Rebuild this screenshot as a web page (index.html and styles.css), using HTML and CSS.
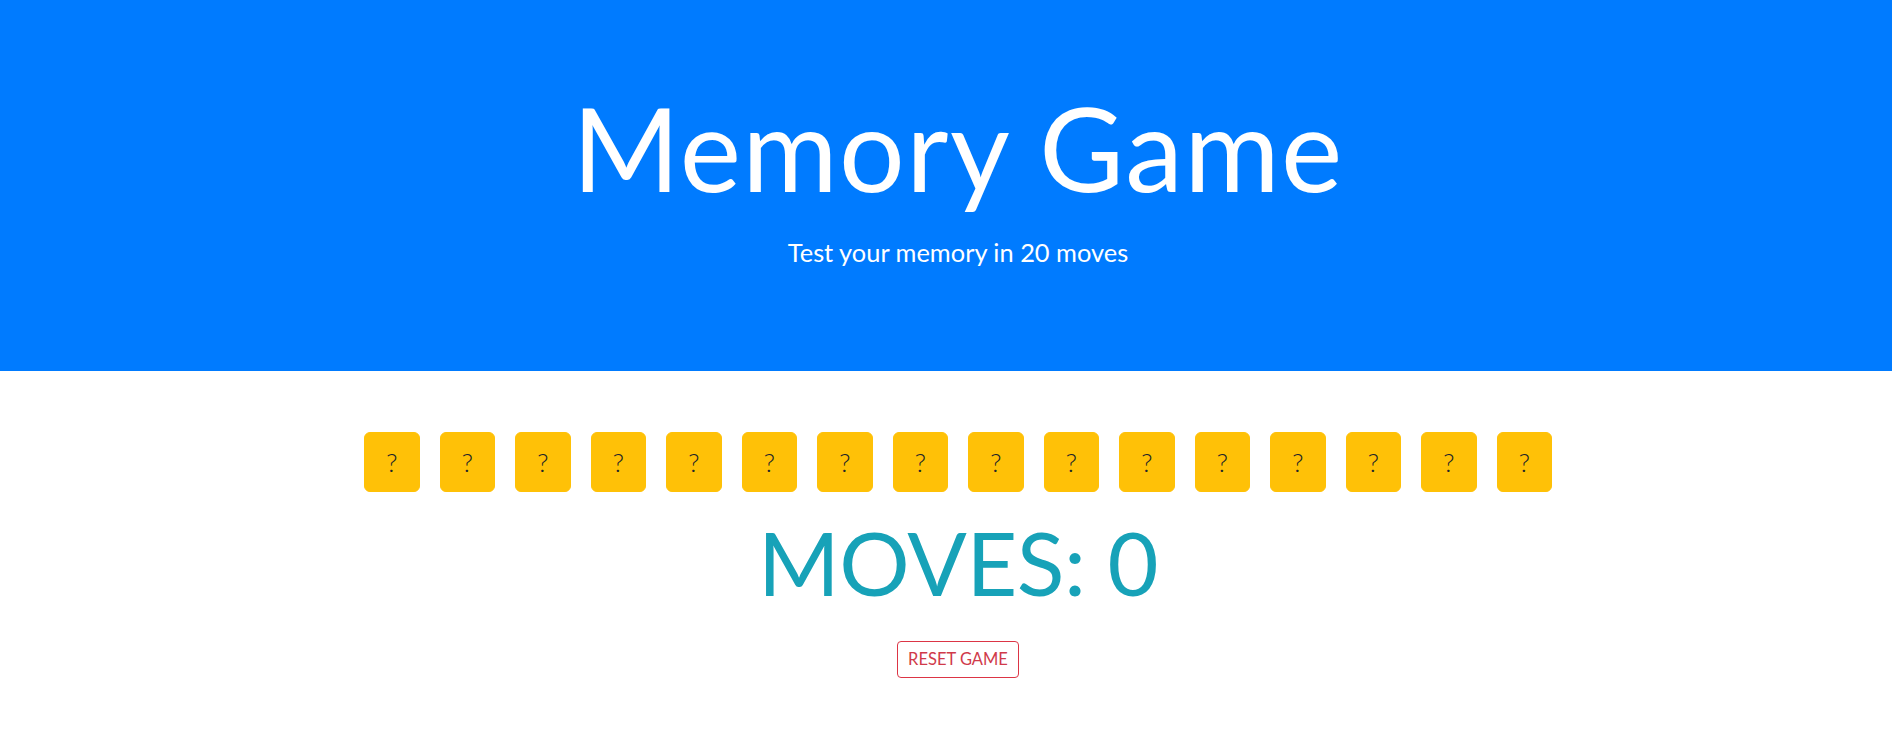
FILE: index.html
```
<!DOCTYPE html>
<html lang="en">
<head>
<meta charset="utf-8">
<title>Memory Game</title>
<link rel="stylesheet" href="styles.css">
</head>
<body>
<header class="hero">
  <div class="wrap">
    <h1 class="title">Memory Game</h1>
    <p class="lead">Test your memory in 20 moves</p>
  </div>
</header>
<main class="wrap game">
  <div class="cards">
    <button class="card">?</button>
    <button class="card">?</button>
    <button class="card">?</button>
    <button class="card">?</button>
    <button class="card">?</button>
    <button class="card">?</button>
    <button class="card">?</button>
    <button class="card">?</button>
    <button class="card">?</button>
    <button class="card">?</button>
    <button class="card">?</button>
    <button class="card">?</button>
    <button class="card">?</button>
    <button class="card">?</button>
    <button class="card">?</button>
    <button class="card">?</button>
  </div>
  <h2 class="moves">MOVES: 0</h2>
  <button class="reset">RESET GAME</button>
</main>
</body>
</html>
```
FILE: styles.css
```
html, body {
  margin: 0;
  padding: 0;
  background: #fff;
  font-family: Lato, "Open Sans", sans-serif;
  color: #212529;
}

.wrap {
  padding-left: 24px;
  display: flex;
  flex-direction: column;
  align-items: center;
}

.hero {
  background: #007bff;
  color: #fff;
  padding: 78px 0 100px;
}

.title {
  margin: 0;
  font-size: 116px;
  font-weight: 400;
  line-height: 1.2;
  letter-spacing: 1.4px;
}

.lead {
  margin: 16px 0 0;
  font-size: 25.4px;
  font-weight: 400;
  line-height: 1.5;
}

.game {
  padding-top: 51px;
}

.cards {
  display: flex;
  justify-content: center;
}

.card {
  width: 55.5px;
  height: 60px;
  margin: 10px;
  padding: 0;
  border: 1px solid #ffc107;
  border-radius: 6px;
  background: #ffc107;
  color: #212529;
  font-family: Lato, "Open Sans", sans-serif;
  font-size: 26px;
  font-weight: 300;
  line-height: 1;
}

.moves {
  margin: 8px 0 0;
  font-size: 88px;
  font-weight: 400;
  line-height: 1.2;
  letter-spacing: -0.5px;
  color: #17a2b8;
}

.reset {
  margin-top: 25px;
  height: 37px;
  padding: 0 10px;
  border: 1px solid #dc3545;
  border-radius: 4px;
  background: #fff;
  color: #d03a4a;
  font-family: Lato, "Open Sans", sans-serif;
  font-size: 16.5px;
}
```
